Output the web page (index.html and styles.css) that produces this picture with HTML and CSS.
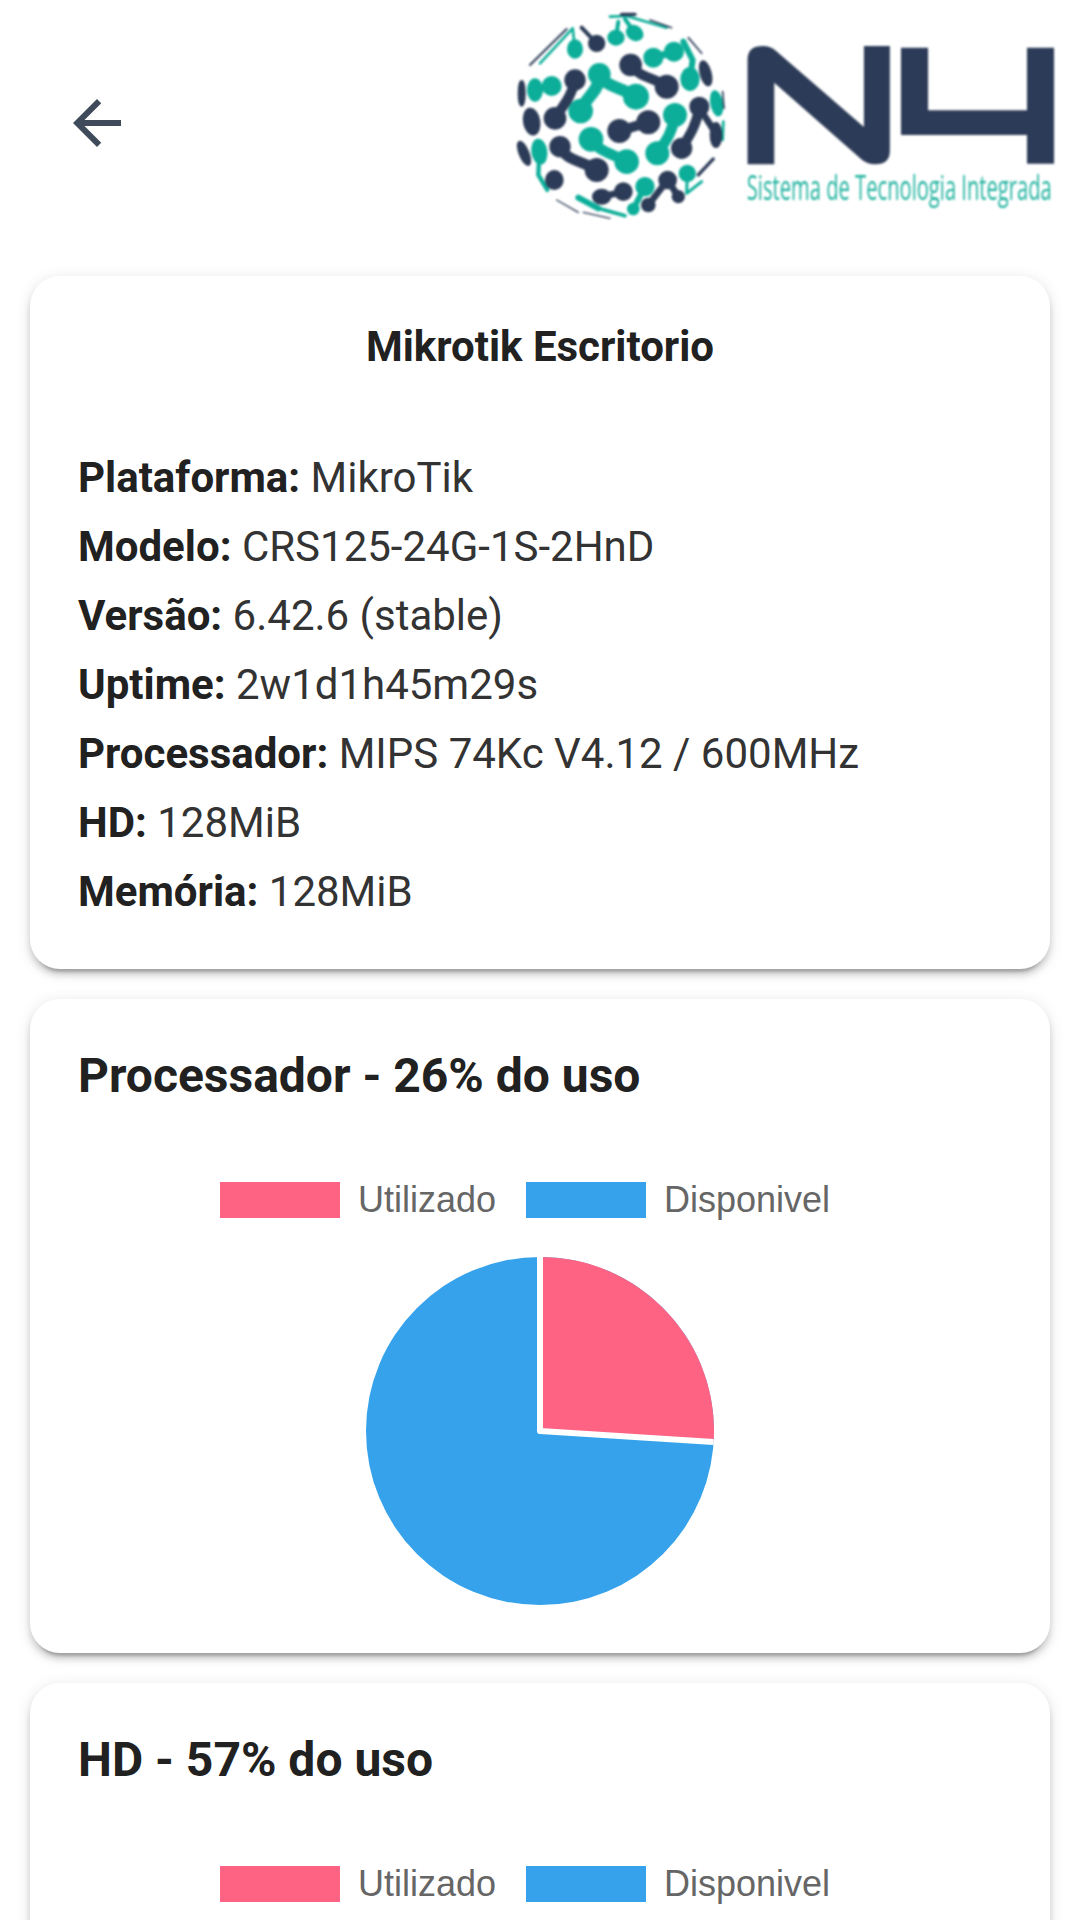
FILE: index.html
```html
<!DOCTYPE html>
<html lang="pt">
<head>
    <meta charset="UTF-8">
    <meta name="viewport" content="width=device-width, initial-scale=1.0">
    <title>Mikrotik Escritorio</title>
    <link rel="stylesheet" href="styles.css">
</head>
<body>
    <header class="topbar">
        <svg class="backArrow" viewBox="0 0 24 24">
            <path d="M20 11H7.83l5.59-5.59L12 4l-8 8 8 8 1.41-1.41L7.83 13H20v-2z"/>
        </svg>

        <svg class="logo" viewBox="0 0 580 240">
            <!-- sphere made of dumbbell shaped blobs -->
            <g transform="translate(10 5) scale(0.3333)">
                <g class="teal">
                    <circle cx="268" cy="208" r="30"/><circle cx="378" cy="275" r="35"/><circle cx="212" cy="318" r="33"/>
                    <path stroke-width="36" d="M268 208C285 245 330 245 378 275M268 222C262 262 225 280 212 318"/>
                    <circle cx="243" cy="403" r="33"/><circle cx="350" cy="470" r="33"/>
                    <path stroke-width="32" d="M243 403C270 445 310 445 350 470"/>
                    <circle cx="495" cy="330" r="32"/><circle cx="442" cy="445" r="32"/>
                    <path stroke-width="32" d="M495 330C488 380 470 405 442 445"/>
                    <ellipse cx="75" cy="255" rx="20" ry="31"/><circle cx="125" cy="243" r="26"/>
                    <path stroke-width="20" d="M75 255L125 243"/>
                    <circle cx="430" cy="158" r="26"/><circle cx="492" cy="140" r="26"/>
                    <path stroke-width="22" d="M430 158L492 140"/>
                    <ellipse cx="540" cy="222" rx="25" ry="32"/>
                    <path stroke-width="18" d="M540 222L548 165L520 110"/>
                    <ellipse cx="195" cy="132" rx="20" ry="25"/>
                    <path stroke-width="8" d="M195 132L188 70L90 175"/>
                    <ellipse cx="318" cy="98" rx="22" ry="20"/>
                    <path stroke-width="12" d="M318 98L325 50"/>
                    <ellipse cx="374" cy="84" rx="24" ry="19" transform="rotate(35 374 84)"/>
                    <path stroke-width="12" d="M374 84L345 42"/>
                    <ellipse cx="88" cy="440" rx="20" ry="35" transform="rotate(-8 88 440)"/>
                    <path stroke-width="13" d="M88 440L85 510L112 555"/>
                    <circle cx="405" cy="545" r="25"/><circle cx="370" cy="612" r="15"/>
                    <path stroke-width="18" d="M405 545L370 612"/>
                    <circle cx="532" cy="505" r="22"/>
                    <path stroke-width="9" d="M532 505L530 565L575 530"/>
                    <ellipse cx="620" cy="295" rx="15" ry="36" transform="rotate(-10 620 295)"/>
                    <path stroke-width="8" d="M640 350L638 405"/>
                    <path stroke-width="18" d="M205 578L265 610"/>
                    <path stroke-width="11" d="M265 610L345 632"/>
                    <path stroke-width="8" d="M300 35L350 33L470 68"/>
                </g>
                <g class="navy">
                    <circle cx="362" cy="180" r="30"/><circle cx="470" cy="245" r="32"/>
                    <path stroke-width="30" d="M362 180C390 220 430 215 470 245"/>
                    <circle cx="328" cy="378" r="32"/><circle cx="415" cy="352" r="32"/>
                    <path stroke-width="30" d="M328 378L415 352"/>
                    <circle cx="195" cy="225" r="28"/><circle cx="135" cy="340" r="30"/>
                    <path stroke-width="30" d="M195 225C185 275 160 300 135 340"/>
                    <circle cx="150" cy="425" r="28"/><circle cx="260" cy="495" r="32"/>
                    <path stroke-width="32" d="M150 425C170 470 215 465 260 495"/>
                    <ellipse cx="133" cy="525" rx="24" ry="26"/>
                    <circle cx="568" cy="305" r="26"/><circle cx="515" cy="430" r="28"/>
                    <ellipse cx="618" cy="390" rx="15" ry="35"/>
                    <path stroke-width="30" d="M568 305C560 360 540 390 515 430"/>
                    <path stroke-width="20" d="M568 305C585 340 605 360 618 390"/>
                    <circle cx="260" cy="115" r="22"/>
                    <path stroke-width="12" d="M260 115L215 68"/>
                    <ellipse cx="275" cy="575" rx="25" ry="20"/><circle cx="340" cy="560" r="24"/>
                    <path stroke-width="20" d="M275 575L340 560"/>
                    <circle cx="473" cy="525" r="24"/><circle cx="415" cy="600" r="18"/><circle cx="505" cy="575" r="16"/>
                    <path stroke-width="20" d="M473 525L415 600M473 525L505 575"/>
                    <ellipse cx="65" cy="350" rx="22" ry="38" transform="rotate(-10 65 350)"/>
                    <ellipse cx="35" cy="265" rx="8" ry="36"/>
                    <ellipse cx="42" cy="445" rx="12" ry="36" transform="rotate(-22 42 445)"/>
                    <ellipse cx="587" cy="205" rx="14" ry="36" transform="rotate(-15 587 205)"/>
                    <path stroke-width="5" d="M535 98L575 145"/>
                    <path stroke-width="10" d="M565 510L610 462"/>
                    <path stroke-width="6" d="M60 180L170 72"/>
                    <path stroke-width="10" d="M335 28L375 28"/>
                    <path stroke-width="5" d="M420 45L485 68"/>
                    <path stroke-width="5" d="M638 260L642 310"/>
                    <path stroke-width="4" d="M140 585L205 622M220 622L300 640"/>
                </g>
            </g>
            <g class="navy" transform="translate(0 1) scale(0.3706 0.3333)">
                <path class="solid" d="M668 490V175Q668 135 710 135Q730 135 745 150L982 378V135H1052V450Q1052 490 1012 490Q990 490 975 475L740 245V490Z"/>
                <path class="solid" d="M1082 140H1155V328H1422V140H1495V488H1422V402H1082Z"/>
            </g>
            <text class="logoText" transform="scale(0.57 1)" x="433" y="200" textLength="535" lengthAdjust="spacingAndGlyphs">Sistema de Tecnologia Integrada</text>
        </svg>
    </header>

    <main>
        <section class="card">
            <h2 class="deviceName">Mikrotik Escritorio</h2>
            <ul class="infoList">
                <li><b>Plataforma:</b> MikroTik</li>
                <li><b>Modelo:</b> CRS125-24G-1S-2HnD</li>
                <li><b>Versão:</b> 6.42.6 (stable)</li>
                <li><b>Uptime:</b> 2w1d1h45m29s</li>
                <li><b>Processador:</b> MIPS 74Kc V4.12 / 600MHz</li>
                <li><b>HD:</b> 128MiB</li>
                <li><b>Memória:</b> 128MiB</li>
            </ul>
        </section>

        <section class="card chartCard">
            <h2 class="chartTitle">Processador - 26% do uso</h2>
            <div class="legend">
                <span class="legendItem"><i class="swatch swatchUsed"></i>Utilizado</span>
                <span class="legendItem"><i class="swatch swatchFree"></i>Disponivel</span>
            </div>
            <svg class="pie" viewBox="-174 -174 348 348">
                <circle class="pieFree" r="174"/>
                <path class="pieUsed" d="M0 0V-174A174 174 0 0 1 173.66 10.93Z"/>
                <path class="pieBorder" d="M0 -174V0L173.66 10.93"/>
            </svg>
        </section>

        <section class="card chartCard">
            <h2 class="chartTitle">HD - 57% do uso</h2>
            <div class="legend">
                <span class="legendItem"><i class="swatch swatchUsed"></i>Utilizado</span>
                <span class="legendItem"><i class="swatch swatchFree"></i>Disponivel</span>
            </div>
        </section>
    </main>
</body>
</html>
```

FILE: styles.css
```css
html,
body {
    height: 1920px;
    overflow: hidden;
}

body {
    margin: 0;
    background-color: #ffffff;
    color: #212121;
    font-family: Roboto, Arial, sans-serif;
}

/* top bar */
.topbar {
    display: flex;
    align-items: flex-start;
    justify-content: space-between;
    height: 276px;
    padding-left: 61px;
}

.backArrow {
    width: 72px;
    height: 72px;
    margin-top: 87px;
    fill: #3f4a5a;
}

.logo {
    width: 580px;
    height: 240px;
    filter: blur(1px);
}

.logo path {
    fill: none;
    stroke-linecap: round;
    stroke-linejoin: round;
}

.logo .solid {
    fill: #2c3b57;
    stroke: none;
}

.teal {
    fill: #0cae99;
    stroke: #0cae99;
}

.navy {
    fill: #2c3b57;
    stroke: #2c3b57;
}

/* stroke makes the blob ends a little fatter */
.logo circle,
.logo ellipse {
    stroke-width: 8px;
}

.logoText {
    font-family: "Open Sans", sans-serif;
    font-size: 35px;
    fill: #22b3a0;
}

/* cards */
main {
    display: flex;
    flex-direction: column;
    gap: 30px;
    padding: 0 30px;
}

.card {
    padding: 48px 48px 43px;
    background-color: #ffffff;
    border-radius: 30px;
    box-shadow: 0 9px 3px -6px rgba(0, 0, 0, 0.2), 0 6px 6px 0 rgba(0, 0, 0, 0.14), 0 3px 15px 0 rgba(0, 0, 0, 0.12);
}

.deviceName {
    margin: 0 0 73px;
    font-size: 42px;
    line-height: 46px;
    text-align: center;
}

.infoList {
    margin: 0;
    padding: 0;
    list-style: none;
    color: #333333;
    font-size: 42px;
    line-height: 69px;
}

.infoList b {
    color: #212121;
}

.chartCard {
    display: flex;
    flex-direction: column;
    padding-bottom: 48px;
}

.chartTitle {
    margin: 0 0 77px;
    font-size: 48px;
    line-height: 58px;
}

/* chart legend, same look as chart.js */
.legend {
    display: flex;
    justify-content: center;
    margin-bottom: 39px;
    color: #666666;
    font-family: "Liberation Sans", Arial, sans-serif;
    font-size: 36px;
    line-height: 36px;
}

.legendItem {
    display: flex;
    align-items: center;
    gap: 18px;
    margin-right: 30px;
}

.swatch {
    width: 120px;
    height: 36px;
}

.swatchUsed {
    background-color: #ff6384;
}

.swatchFree {
    background-color: #36a2eb;
}

.pie {
    align-self: center;
    width: 348px;
    height: 348px;
}

.pieFree {
    fill: #36a2eb;
}

.pieUsed {
    fill: #ff6384;
}

.pieBorder {
    fill: none;
    stroke: #ffffff;
    stroke-width: 6px;
    stroke-linejoin: round;
}
```
